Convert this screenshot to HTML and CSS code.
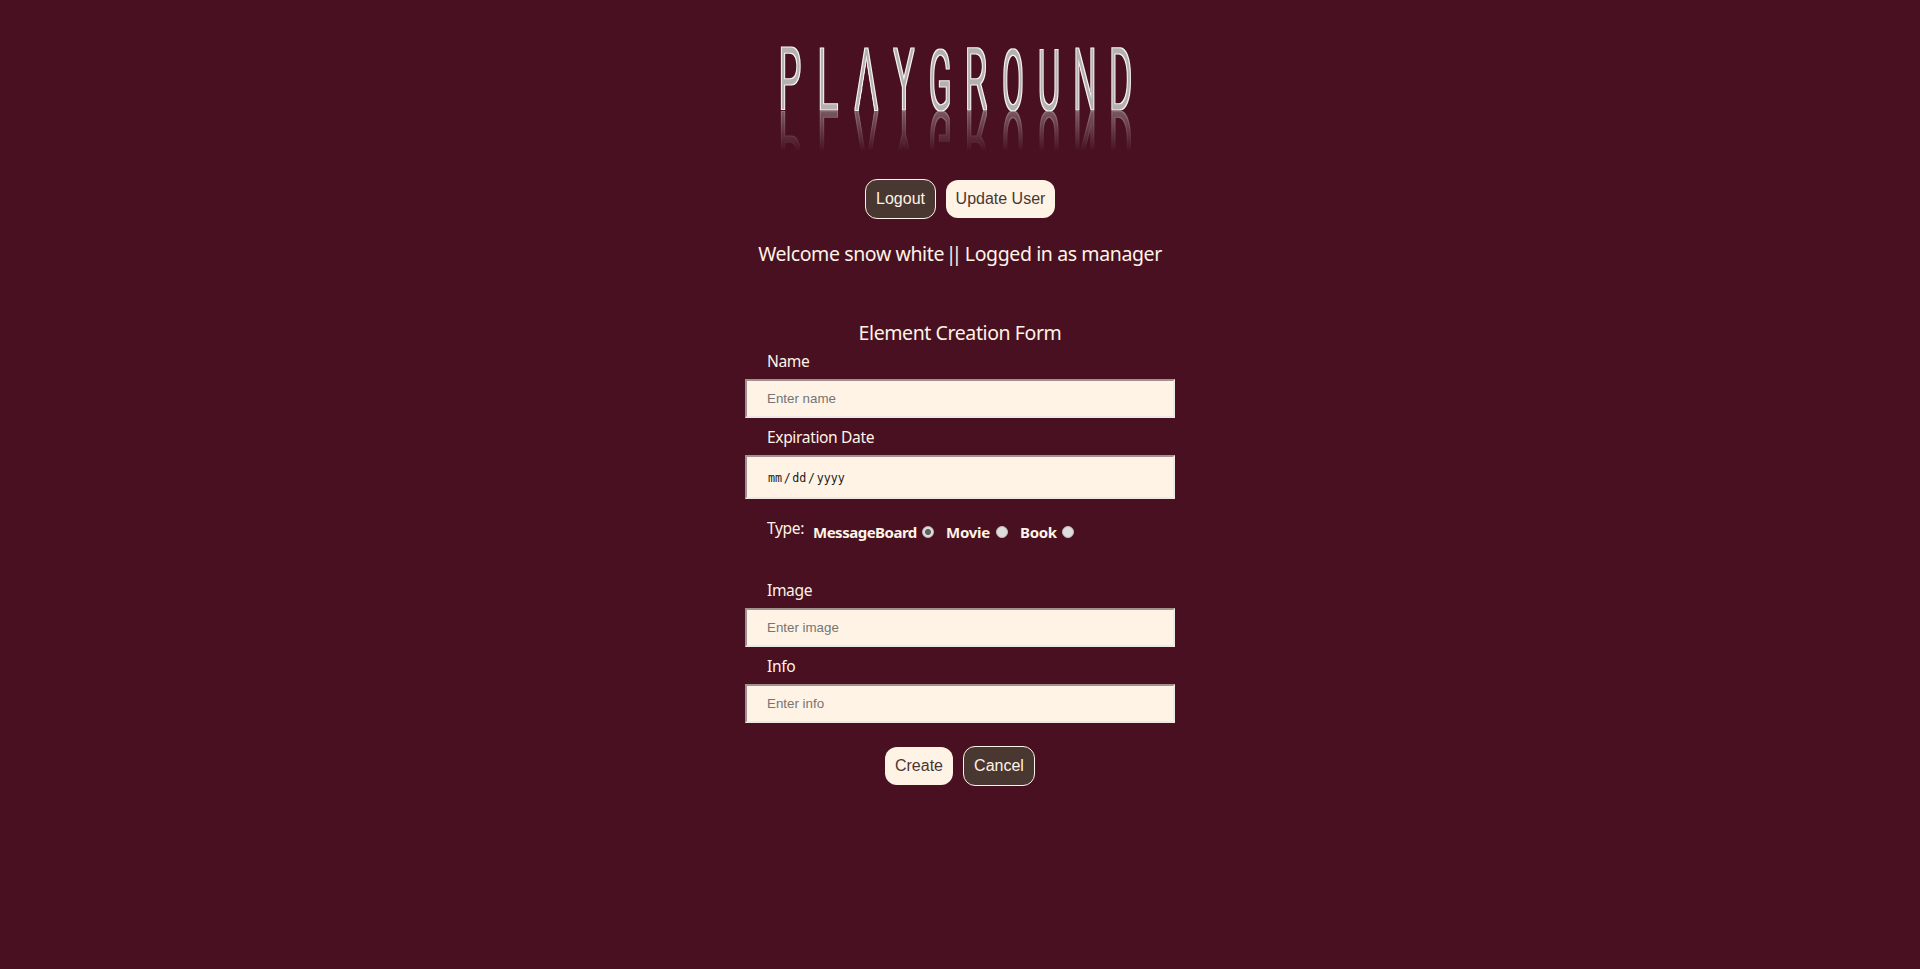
FILE: index.html
```html
<!DOCTYPE html>
<html lang="en">
<head>
<meta charset="utf-8">
<title>Playground</title>
<link rel="stylesheet" href="styles.css">
</head>
<body>
<main class="page">
  <svg class="logo" viewBox="770 40 380 120" role="img" aria-label="PLAYGROUND">
    <defs>
      <linearGradient id="fade" x1="0" y1="111" x2="0" y2="152" gradientUnits="userSpaceOnUse">
        <stop offset="0" stop-color="#fff" stop-opacity=".45"/>
        <stop offset="1" stop-color="#fff" stop-opacity="0"/>
      </linearGradient>
      <mask id="reflection" maskUnits="userSpaceOnUse" x="770" y="110.500" width="380" height="50">
        <rect x="770" y="111" width="380" height="49" fill="url(#fade)"/>
      </mask>
      <clipPath id="legs" clipPathUnits="userSpaceOnUse">
        <path clip-rule="evenodd" d="M-60-80H60V20H-60zM-22.500 10L0-53L22.500 10z"/>
      </clipPath>
      <filter id="outline" filterUnits="userSpaceOnUse" x="770" y="40" width="380" height="80">
        <feMorphology in="SourceAlpha" operator="dilate" radius="1" result="wide"/>
        <feFlood flood-color="#f4f1f2"/>
        <feComposite in2="wide" operator="in" result="edge"/>
        <feMerge><feMergeNode in="edge"/><feMergeNode in="SourceGraphic"/></feMerge>
      </filter>
    </defs>
    <g id="word" class="word" filter="url(#outline)">
      <text transform="translate(790 108) scale(.45 1)">P</text>
      <text transform="translate(827.500 108) scale(.47 1)">L</text>
      <text transform="translate(866.500 108) scale(.44 1)" clip-path="url(#legs)">A</text>
      <text transform="translate(904 108) scale(.39 1)">Y</text>
      <text transform="translate(940 107.500) scale(.39 .985)">G</text>
      <text transform="translate(976.500 108) scale(.42 1)">R</text>
      <text transform="translate(1013 107.500) scale(.37 .985)">O</text>
      <text transform="translate(1049 107.500) scale(.4 .992)">U</text>
      <text transform="translate(1085 108) scale(.38 1)">N</text>
      <text transform="translate(1120.500 108) scale(.41 1)">D</text>
    </g>
    <g mask="url(#reflection)"><use href="#word" transform="matrix(1 0 0 -1 0 221)"/></g>
  </svg>

  <nav class="actions">
    <button class="btn dark">Logout</button>
    <button class="btn light">Update User</button>
  </nav>
  <p class="welcome">Welcome snow white <span class="bars">||</span> Logged in as manager</p>

  <form class="form">
    <h1 class="title">Element Creation Form</h1>
    <label class="label first" for="name">Name</label>
    <input class="field" id="name" type="text" placeholder="Enter name">
    <label class="label">Expiration Date</label>
    <div class="field date">mm<span class="slash">/</span>dd<span class="slash">/</span>yyyy</div>
    <div class="types">
      <span class="types-label">Type:</span>
      <label class="option board">MessageBoard<input class="radio" type="radio" name="type" checked></label>
      <label class="option movie">Movie<input class="radio" type="radio" name="type"></label>
      <label class="option book">Book<input class="radio" type="radio" name="type"></label>
    </div>
    <label class="label" for="image">Image</label>
    <input class="field" id="image" type="text" placeholder="Enter image">
    <label class="label" for="info">Info</label>
    <input class="field" id="info" type="text" placeholder="Enter info">
    <div class="actions submit">
      <button class="btn light" type="button">Create</button>
      <button class="btn dark" type="button">Cancel</button>
    </div>
  </form>
</main>
</body>
</html>
```
FILE: styles.css
```css
* { box-sizing: border-box; }
html { background: #481020; }
body {
  margin: 0;
  color: #fff3e6;
  font-family: "Noto Sans", "Open Sans", sans-serif;
}
.page { display: flex; flex-direction: column; align-items: center; padding-top: 40px; }
.logo { display: block; width: 380px; height: 120px; overflow: visible; }
.word text {
  font-family: Roboto, sans-serif;
  font-weight: 100;
  font-size: 81px;
  text-anchor: middle;
  fill: #b5b0b2;
  stroke: #b5b0b2;
  stroke-width: 2.3px;
  vector-effect: non-scaling-stroke;
}
.actions { display: flex; justify-content: center; align-items: center; gap: 10px; height: 40px; margin-top: 19px; }
.btn { font: 16px "Liberation Sans", Arial, sans-serif; padding: 0; border-radius: 12px; white-space: nowrap; }
.light { height: 38px; width: 109px; border: 0; background: #fff3e6; color: #493731; }
.dark { height: 40px; width: 71px; border: 1px solid #fff3e6; background: #493731; color: #fff3e6; }
.welcome { margin: 20px 0 0; font-size: 19.5px; line-height: 30px; letter-spacing: -0.39px; white-space: nowrap; }
.bars { letter-spacing: -5px; margin: 0 3px 0 -3px; }
.form { display: flex; flex-direction: column; width: 430px; margin-top: 49px; }
.title { margin: 0; font-size: 19.5px; font-weight: 400; line-height: 29px; text-align: center; letter-spacing: -0.41px; }
.label { height: 37px; padding: 9px 0 0 22px; font-size: 15.6px; line-height: 20px; letter-spacing: -0.38px; }
.first { height: 32px; padding-top: 4px; }
.field {
  width: 430px;
  height: 39px;
  padding: 0 20px;
  border: 2px solid;
  border-color: #a39192 #eee8e6 #eee8e6 #a39192;
  border-radius: 0;
  background: #fff3e6;
  font: 13.333px "Liberation Sans", Arial, sans-serif;
}
.field::placeholder { color: #757575; opacity: 1; }
.date { height: 44px; padding-left: 21px; font: 11.7px/42px "DejaVu Sans Mono", monospace; color: #222; }
.slash { margin: 0 1.6px; }
.types { display: flex; height: 72px; padding: 19px 0 0 22px; font-size: 15.6px; line-height: 20px; }
.types-label { width: 46px; letter-spacing: -0.38px; }
.option { display: flex; align-items: center; justify-content: space-between; height: 20px; margin-top: 4px; font-size: 15px; font-weight: 700; letter-spacing: -0.5px; }
.board { width: 121px; margin-right: 12px; }
.movie { width: 62px; margin-right: 12px; letter-spacing: -0.25px; }
.book { width: 54px; letter-spacing: -0.3px; }
.radio { appearance: none; width: 12px; height: 12px; margin: 0; border: 1px solid #c5bcbc; border-radius: 50%; background: #ddd; }
.radio:checked { background: radial-gradient(circle, #606060 0 2.7px, #ddd 3.3px); }
.submit { margin-top: 23px; }
.submit .light { width: 68px; }
.submit .dark { width: 72px; }
```
